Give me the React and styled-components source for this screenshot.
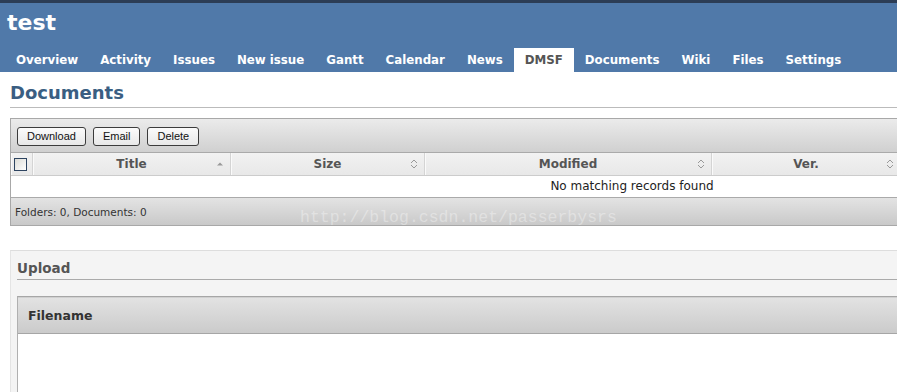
import React from 'react';
import styled, { createGlobalStyle } from 'styled-components';

const GlobalStyle = createGlobalStyle`
  html, body {
    margin: 0;
    padding: 0;
    background: #ffffff;
    font-family: "DejaVu Sans", Verdana, sans-serif;
    overflow: hidden;
  }
`;

const Page = styled.div`
  width: 897px;
  height: 392px;
  overflow: hidden;
`;

const Header = styled.header`
  height: 69px;
  border-top: 3px solid #2c3d55;
  background: #5079a9;
  display: flex;
  flex-direction: column;
  justify-content: space-between;
`;

const ProjectTitle = styled.h1`
  margin: 7px 0 0 7px;
  font-size: 22px;
  line-height: 26px;
  font-weight: bold;
  color: #ffffff;
`;

const MainMenu = styled.nav`
  display: flex;
  padding-left: 5px;
`;

const Tab = styled.a`
  height: 24px;
  line-height: 24px;
  padding: 0 11px;
  font-size: 11.8px;
  font-weight: bold;
  white-space: nowrap;
  color: ${(p) => (p.$active ? '#555555' : '#ffffff')};
  background: ${(p) => (p.$active ? '#ffffff' : 'transparent')};
`;

const Content = styled.main`
  position: relative;
  padding: 0 0 0 10px;
  width: 1300px;
`;

const Heading = styled.h2`
  margin: 10px 0 0;
  padding-bottom: 3px;
  border-bottom: 1px solid #bbbbbb;
  font-size: 18px;
  line-height: 22px;
  color: #3a5e82;
`;

const GridBox = styled.div`
  margin-top: 10px;
  width: 1242px;
  border: 1px solid #a8a8a8;
`;

const Toolbar = styled.div`
  height: 33px;
  display: flex;
  align-items: center;
  gap: 7px;
  padding-left: 6px;
  background: linear-gradient(#ebebeb, #d0d0d0);
  border-bottom: 1px solid #aaaaaa;
`;

const ToolButton = styled.button`
  height: 19px;
  padding: 0 9px;
  border: 1px solid #3c3c3c;
  border-radius: 3px;
  background: linear-gradient(#fbfbfb, #e8e8e8);
  font-family: "Liberation Sans", Arial, sans-serif;
  font-size: 11px;
  color: #111111;
  margin-top: 1px;
`;

const HeadRow = styled.div`
  height: 22px;
  display: grid;
  grid-template-columns: 22px 198px 194px 287px 189px 1fr;
  background: linear-gradient(#f2f2f2, #e8e8e8);
  border-bottom: 1px solid #cccccc;
`;

const HeadCell = styled.div`
  position: relative;
  display: flex;
  align-items: center;
  justify-content: ${(p) => (p.$start ? 'flex-start' : 'center')};
  font-size: 12px;
  font-weight: bold;
  color: #555555;
  border-right: 1px solid #d4d4d4;
  box-shadow: inset 1px 0 0 #fafafa;
`;

const SortMark = styled.span`
  position: absolute;
  right: 6px;
  top: 6px;
  display: flex;
  width: 8px;
  height: 10px;
`;

const CheckBox = styled.span`
  width: 11px;
  height: 11px;
  border: 1px solid #2d4460;
  background: linear-gradient(135deg, #dcdcd6, #ffffff);
  margin-left: 3px;
`;

const EmptyRow = styled.div`
  height: 21px;
  line-height: 21px;
  text-align: center;
  font-size: 12px;
  color: #222222;
  background: #ffffff;
  border-bottom: 1px solid #aaaaaa;
`;

const Footer = styled.div`
  height: 27px;
  display: flex;
  align-items: center;
  padding-left: 4px;
  font-size: 10.5px;
  color: #333333;
  background: linear-gradient(#e3e3e3, #c9c9c9);
`;

const Watermark = styled.span`
  position: absolute;
  left: 300px;
  top: 126px;
  font-family: "Liberation Mono", "Courier New", monospace;
  font-size: 16.5px;
  color: rgba(255, 255, 255, 0.35);
  pointer-events: none;
`;

const UploadBox = styled.section`
  margin-top: 24px;
  padding: 10px 0 0 6px;
  background: #f4f4f4;
  border-top: 1px solid #dddddd;
  border-left: 1px solid #e4e4e4;
`;

const UploadTitle = styled.h3`
  margin: 0;
  padding-bottom: 3px;
  border-bottom: 1px solid #aaaaaa;
  font-size: 13.5px;
  line-height: 15px;
  color: #555555;
`;

const UploadTable = styled.div`
  margin-top: 16px;
  border-top: 1px solid #a6a6a6;
  border-left: 1px solid #b0b0b0;
`;

const UploadHead = styled.div`
  height: 35px;
  display: flex;
  align-items: center;
  padding-left: 10px;
  border-top: 1px solid #d0d0d0;
  border-bottom: 1px solid #a6a6a6;
  background: linear-gradient(#e2e2e2, #cbcbcb);
  font-size: 12.5px;
  font-weight: bold;
  color: #333333;
`;

const UploadBody = styled.div`
  height: 80px;
  background: #ffffff;
`;

const SortUp = () => (
  <svg width="8" height="10" viewBox="0 0 8 10">
    <path d="M1 6.5 L4 3.5 L7 6.5 Z" fill="#999999" />
  </svg>
);

const SortBoth = () => (
  <svg width="8" height="10" viewBox="0 0 8 10">
    <path d="M1 4 L4 1 L7 4 M1 6 L4 9 L7 6" fill="none" stroke="#999999" strokeWidth="1" />
  </svg>
);

const tabs = ['Overview', 'Activity', 'Issues', 'New issue', 'Gantt', 'Calendar', 'News', 'DMSF', 'Documents', 'Wiki', 'Files', 'Settings'];

const columns = [
  { label: 'Title', sort: 'up' },
  { label: 'Size', sort: 'both' },
  { label: 'Modified', sort: 'both' },
  { label: 'Ver.', sort: 'both' },
];

export default function App() {
  return (
    <Page>
      <GlobalStyle />
      <Header>
        <ProjectTitle>test</ProjectTitle>
        <MainMenu>
          {tabs.map((t) => (
            <Tab key={t} $active={t === 'DMSF'}>{t}</Tab>
          ))}
        </MainMenu>
      </Header>
      <Content>
        <Heading>Documents</Heading>
        <GridBox>
          <Toolbar>
            <ToolButton>Download</ToolButton>
            <ToolButton>Email</ToolButton>
            <ToolButton>Delete</ToolButton>
          </Toolbar>
          <HeadRow>
            <HeadCell $start>
              <CheckBox />
            </HeadCell>
            {columns.map((c) => (
              <HeadCell key={c.label}>
                {c.label}
                <SortMark>{c.sort === 'up' ? <SortUp /> : <SortBoth />}</SortMark>
              </HeadCell>
            ))}
            <HeadCell />
          </HeadRow>
          <EmptyRow>No matching records found</EmptyRow>
          <Footer>Folders: 0, Documents: 0</Footer>
        </GridBox>
        <Watermark>http://blog.csdn.net/passerbysrs</Watermark>
        <UploadBox>
          <UploadTitle>Upload</UploadTitle>
          <UploadTable>
            <UploadHead>Filename</UploadHead>
            <UploadBody />
          </UploadTable>
        </UploadBox>
      </Content>
    </Page>
  );
}
